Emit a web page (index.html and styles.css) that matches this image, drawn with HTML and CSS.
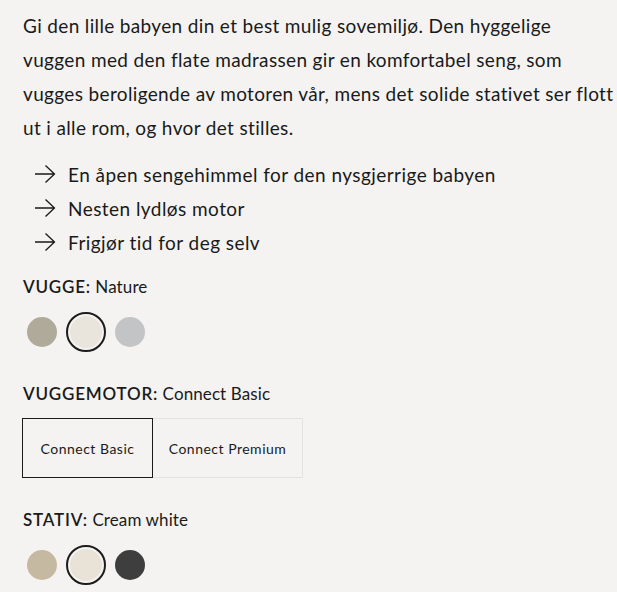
FILE: index.html
```html
<!DOCTYPE html>
<html lang="no">
<head>
<meta charset="utf-8">
<link rel="stylesheet" href="styles.css">
</head>
<body>
<div class="product">
  <p class="desc">Gi den lille babyen din et best mulig sovemiljø. Den hyggelige vuggen med den flate madrassen gir en komfortabel seng, som vugges beroligende av motoren vår, mens det solide stativet ser flott ut i alle rom, og hvor det stilles.</p>
  <ul class="usp">
    <li><svg class="arrow" viewBox="0 0 22 18" width="22" height="18"><path d="M1 9H20.5M11.5 0.5L20.5 9L11.5 17.5" fill="none" stroke="#1a1a1a" stroke-width="1.3"/></svg><span>En åpen sengehimmel for den nysgjerrige babyen</span></li>
    <li><svg class="arrow" viewBox="0 0 22 18" width="22" height="18"><path d="M1 9H20.5M11.5 0.5L20.5 9L11.5 17.5" fill="none" stroke="#1a1a1a" stroke-width="1.3"/></svg><span>Nesten lydløs motor</span></li>
    <li><svg class="arrow" viewBox="0 0 22 18" width="22" height="18"><path d="M1 9H20.5M11.5 0.5L20.5 9L11.5 17.5" fill="none" stroke="#1a1a1a" stroke-width="1.3"/></svg><span>Frigjør tid for deg selv</span></li>
  </ul>

  <div class="option">
    <div class="opt-label"><b>VUGGE:</b> Nature</div>
    <div class="swatches">
      <span class="swatch"><span class="dot c-nature"></span></span>
      <span class="swatch selected"><span class="dot c-cream"></span></span>
      <span class="swatch"><span class="dot c-grey"></span></span>
    </div>
  </div>

  <div class="option">
    <div class="opt-label"><b>VUGGEMOTOR:</b> Connect Basic</div>
    <div class="buttons">
      <button class="btn active">Connect Basic</button>
      <button class="btn">Connect Premium</button>
    </div>
  </div>

  <div class="option">
    <div class="opt-label"><b>STATIV:</b> Cream white</div>
    <div class="swatches">
      <span class="swatch"><span class="dot c-sand"></span></span>
      <span class="swatch selected"><span class="dot c-cream2"></span></span>
      <span class="swatch"><span class="dot c-dark"></span></span>
    </div>
  </div>
</div>
</body>
</html>
```
FILE: styles.css
```css
html, body {
  margin: 0;
  padding: 0;
  background: #f4f3f1;
}
body {
  font-family: "Lato", "Open Sans", sans-serif;
  color: #1a1a1a;
}
.product {
  padding: 9px 0 0 23px;
}
.desc {
  margin: 0;
  width: 594px;
  font-size: 19px;
  line-height: 34px;
  letter-spacing: 0.35px;
}
.usp {
  list-style: none;
  margin: 12px 0 0 0;
  padding: 0 0 0 11px;
}
.usp li {
  display: flex;
  align-items: center;
  height: 34px;
  font-size: 19px;
  letter-spacing: 0.45px;
}
.arrow {
  margin-right: 12px;
  flex: none;
}
.option {
  margin-top: 32px;
}
.option:first-of-type {
  margin-top: 18px;
}
.opt-label {
  font-size: 17px;
  line-height: 20px;
  letter-spacing: 0.1px;
}
.opt-label b {
  font-weight: 600;
  letter-spacing: 0.8px;
}
.swatches {
  display: flex;
  gap: 4px;
  margin-top: 15px;
  margin-left: -1px;
}
.swatch {
  width: 40px;
  height: 40px;
  border-radius: 50%;
  border: 2px solid transparent;
  box-sizing: border-box;
  display: flex;
  align-items: center;
  justify-content: center;
}
.swatch.selected {
  border-color: #1c1c1c;
}
.dot {
  width: 30px;
  height: 30px;
  border-radius: 50%;
  display: block;
}
.swatch.selected .dot { width: 32px; height: 32px; }
.c-nature { background: #b0aa9b; }
.c-cream { background: #e9e4dc; }
.c-grey { background: #c3c4c6; }
.c-sand { background: #c5baa1; }
.c-cream2 { background: #e9e2d7; }
.c-dark { background: #3e3e3e; }
.buttons {
  display: flex;
  margin-top: 14px;
  margin-left: -1px;
}
.btn {
  font-family: inherit;
  font-size: 14px;
  letter-spacing: 0.5px;
  white-space: nowrap;
  color: #1a1a1a;
  background: transparent;
  height: 60px;
  padding: 0;
  box-sizing: border-box;
  border: 1px solid #e3e2df;
  border-left: none;
  width: 150px;
}
.btn.active {
  border: 1.5px solid #1a1a1a;
  width: 131px;
}
```
